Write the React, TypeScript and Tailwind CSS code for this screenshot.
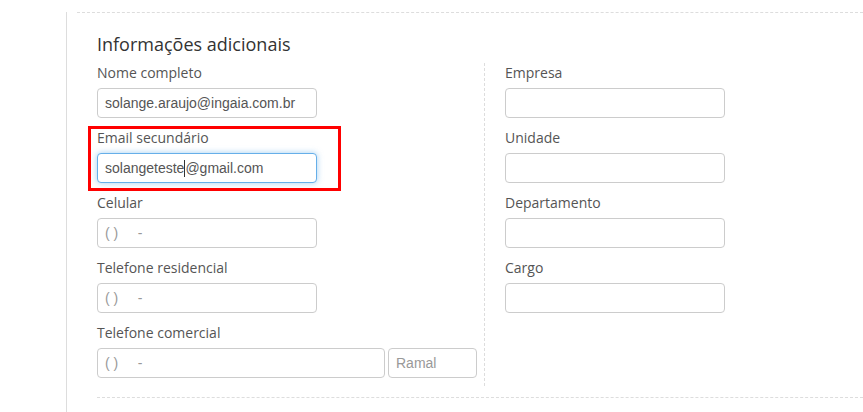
const box = "h-[30px] shrink-0 rounded-[4px] border bg-white px-[7px] flex items-center text-[14px] text-[#555] font-['Liberation_Sans',Arial,sans-serif]";
const field = `${box} w-[220px] border-[#ccc]`;
const label = "h-[20px] leading-[20px] text-[14px] text-[#555] mb-[5px]";

function Field({ name, children }: { name: string; children?: React.ReactNode }) {
  return (
    <div className="mb-[10px]">
      <div className={label}>{name}</div>
      {children ?? <div className={field} />}
    </div>
  );
}

function Phone() {
  return <span className="text-[#999] whitespace-pre">{"( )     -"}</span>;
}

export default function App() {
  return (
    <div className="h-[412px] w-[863px] overflow-hidden bg-white font-['Open_Sans',sans-serif]">
      <div className="ml-[66px] h-full border-l border-[#ddd] pl-[10px]">
        <div className="mt-[12px] border-t border-dashed border-[#ddd] pl-[20px] pt-[19px]">
          <h2 className="h-[24px] text-[18px] leading-[24px] text-[#333]">Informações adicionais</h2>

          <div className="mt-[7px] flex border-b border-dashed border-[#ddd] pb-[11px]">
            <div className="w-[388px] border-r border-dashed border-[#ddd]">
              <Field name="Nome completo">
                <div className={field}>solange.araujo@ingaia.com.br</div>
              </Field>

              <div className="relative mb-[10px]">
                <div className="pointer-events-none absolute -left-[9px] -top-[2px] h-[65px] w-[253px] border-[3px] border-[#f00]" />
                <div className={label}>Email secundário</div>
                <div className={`${box} w-[220px] border-[#66afe9] shadow-[0_0_6px_rgba(102,175,233,0.6)]`}>
                  solangeteste
                  <span className="inline-block h-[17px] w-px bg-[#333]" />
                  @gmail.com
                </div>
              </div>

              <Field name="Celular">
                <div className={field}><Phone /></div>
              </Field>
              <Field name="Telefone residencial">
                <div className={field}><Phone /></div>
              </Field>

              <div className="mb-[8px]">
                <div className={label}>Telefone comercial</div>
                <div className="flex gap-[3px]">
                  <div className={`${box} w-[288px] border-[#ccc]`}><Phone /></div>
                  <div className={`${box} w-[89px] border-[#ccc] text-[#999]`}>Ramal</div>
                </div>
              </div>
            </div>

            <div className="pl-[20px]">
              <Field name="Empresa" />
              <Field name="Unidade" />
              <Field name="Departamento" />
              <Field name="Cargo" />
            </div>
          </div>
        </div>
      </div>
    </div>
  );
}
